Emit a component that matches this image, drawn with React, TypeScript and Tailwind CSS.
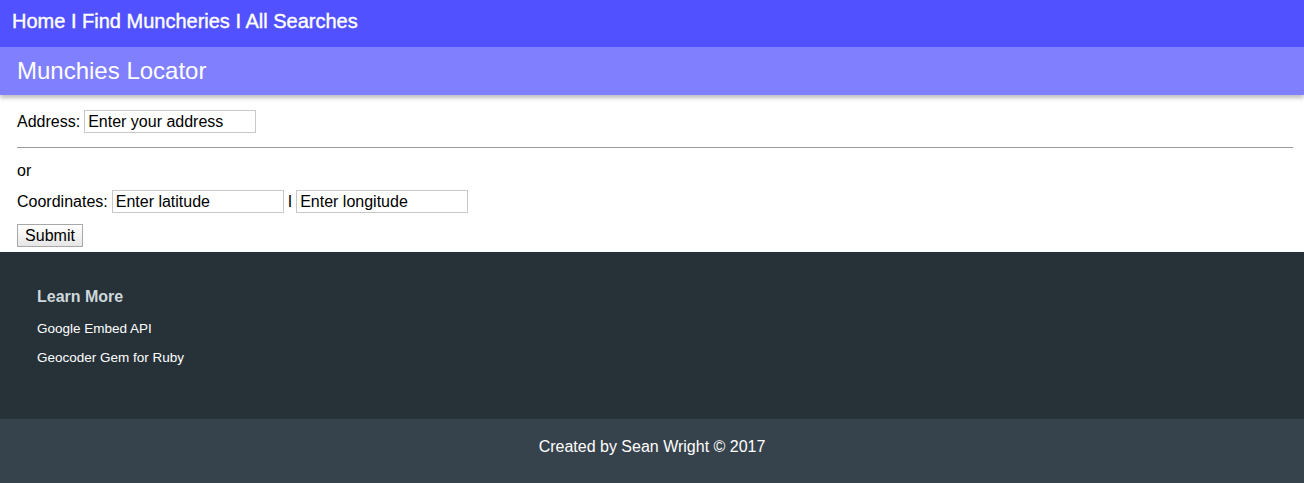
import React from 'react';

const font = { fontFamily: '"Liberation Sans", Arial, sans-serif' };

const TextBox = ({ placeholder }: { placeholder: string }) => (
  <input
    type="text"
    defaultValue={placeholder}
    className="w-[172px] h-[23px] border border-[#c8c8c8] px-[3px] text-[16px] text-black outline-none"
  />
);

export default function App() {
  return (
    <div className="w-full min-h-[483px] bg-white" style={font}>
      {/* top nav */}
      <nav className="h-[47px] bg-[#5151ff] flex items-center px-[12px] pb-[6px]">
        <span className="text-white text-[20px] [-webkit-text-stroke:0.4px_white]">
          Home I Find Muncheries I All Searches
        </span>
      </nav>

      {/* page title */}
      <header className="h-[48px] bg-[#8080ff] flex items-center px-[17px] shadow-[0_3px_4px_rgba(0,0,0,0.25)] relative">
        <h1 className="text-white text-[24px]">Munchies Locator</h1>
      </header>

      <main className="pl-[17px] pr-[11px] pt-[15px] pb-[5px] text-[16px] text-black">
        <div className="flex items-center gap-[4px] h-[23px]">
          <span>Address:</span>
          <TextBox placeholder="Enter your address" />
        </div>

        <hr className="mt-[14px] border-t border-[#9a9a9a]" />

        <p className="mt-[14px] leading-[18px]">or</p>

        <div className="mt-[10px] flex items-center h-[23px]">
          <span className="mr-[4px]">Coordinates:</span>
          <TextBox placeholder="Enter latitude" />
          <span className="mx-[4px]">I</span>
          <TextBox placeholder="Enter longitude" />
        </div>

        <button className="block mt-[11px] w-[66px] h-[23px] border border-[#a8a8a8] bg-gradient-to-b from-white to-[#e6e6e6] text-[16px] leading-none">
          Submit
        </button>
      </main>

      <footer className="h-[167px] bg-[#263238] px-[37px] pt-[36px]">
        <h4 className="text-[16px] font-bold text-[#cfd8dc] leading-[18px]">Learn More</h4>
        <ul className="mt-[15px] text-[13.5px] text-white space-y-[13px] leading-[16px]">
          <li>Google Embed API</li>
          <li>Geocoder Gem for Ruby</li>
        </ul>
      </footer>

      <div className="h-[64px] bg-[#37434c] pt-[19px]">
        <p className="text-white text-[16px] leading-[18px] text-center">Created by Sean Wright © 2017</p>
      </div>
    </div>
  );
}
